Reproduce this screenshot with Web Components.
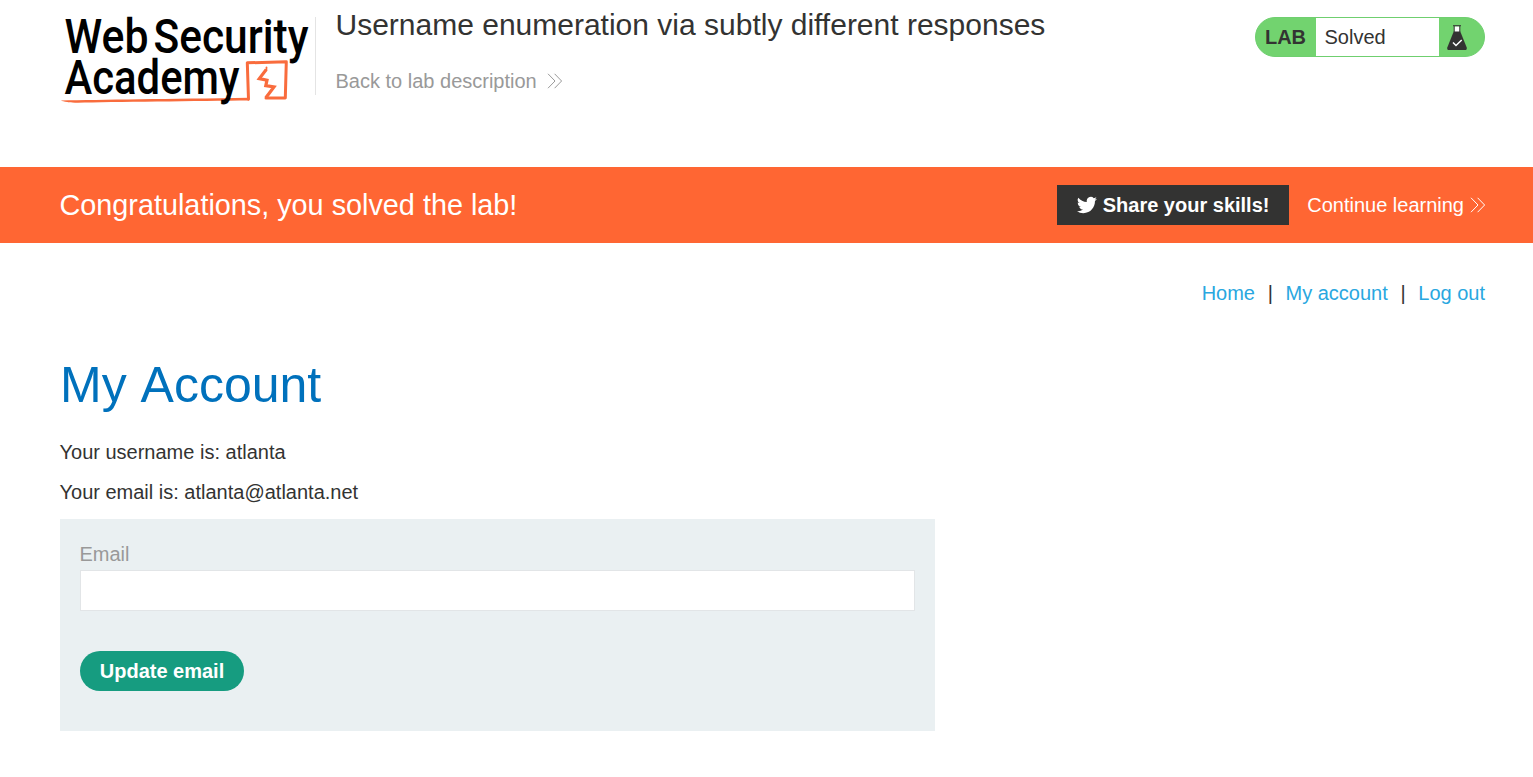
<!DOCTYPE html>
<html lang="en">
<head>
<meta charset="utf-8">
<title>Username enumeration via subtly different responses</title>
<style>
html,body{margin:0;padding:0;background:#fff}
body{font-family:"Liberation Sans",Arial,sans-serif;font-size:20px;line-height:24px;color:#333332;overflow:hidden}
</style>
</head>
<body>
<academy-page></academy-page>
<script>
function define(name, html) {
  const template = document.createElement('template');
  template.innerHTML = html;
  customElements.define(name, class extends HTMLElement {
    constructor() {
      super();
      this.attachShadow({mode: 'open'}).append(template.content.cloneNode(true));
    }
  });
}

define('double-chevron', `
<style>:host{display:inline-block;width:16px;height:16px}svg{display:block}</style>
<svg width="16" height="16" viewBox="0 0 16 16" fill="none" stroke="currentColor" stroke-width="1"><path d="M1 .8 8 8 1 15.2M7.6.8 14.6 8 7.6 15.2"/></svg>`);

define('academy-logo', `
<style>:host{display:block;width:255px;height:110px}svg{display:block;overflow:visible}text{font-family:Roboto,sans-serif;font-weight:500;font-size:48px;fill:#000}</style>
<svg width="255" height="110" viewBox="60 0 255 110">
<g fill="none" stroke="#f96c3d" stroke-linejoin="round" stroke-linecap="round">
<path stroke-width="3" d="M248.5 99.3 247.3 62.8 286.3 61.8 285.3 98H266"/>
<path stroke-width="3.2" stroke-linejoin="miter" stroke-linecap="butt" d="M266.3 69.5 259.3 78.6 267 80.2 265.8 85.6 274 86.9 265.8 97.8"/>
<path stroke-width="1.6" d="M266.5 67.3V70"/>
</g>
<path fill="#f96c3d" d="M61 100.5C100 99.8 170 99 249 97.8V100.6C200 101.2 110 102 78 102.8 70 102.8 63 101.7 61 100.5Z"/>
<text x="64.5" y="53.3" textLength="84" lengthAdjust="spacingAndGlyphs">Web</text>
<text x="153.5" y="53.3" textLength="155" lengthAdjust="spacingAndGlyphs">Security</text>
<text x="64.5" y="94" textLength="175" lengthAdjust="spacingAndGlyphs">Academy</text>
</svg>`);

define('lab-status', `
<style>
:host{display:flex;box-sizing:border-box;width:230px;height:40px;border:1px solid #6fcf6f;border-radius:20px;background:#72d36f;overflow:hidden;line-height:38px}
b{width:60px;text-align:center;box-sizing:border-box;color:#333332;padding-right:1px}
span{width:123px;box-sizing:border-box;padding-left:8.5px;background:#fff}
svg{display:block;margin:7px 0 0 7px}
</style>
<b>LAB</b><span><slot></slot></span>
<svg width="22" height="27" viewBox="0 0 22 27"><path fill="#fff" d="M8.2 1.5h5.6v6H8.2z"/><path fill="none" stroke="#333332" d="M7 .7h8M8.2 1v6M13.8 1v6"/><path fill="#333332" d="M7.7 6.5h6.6l6.3 15.8q.9 2.8-1.6 2.8H3q-2.5 0-1.6-2.8z"/><path fill="none" stroke="#fff" stroke-width="1.5" d="m7 17.5 3 3L15.7 15"/></svg>`);

define('lab-header', `
<style>
:host{display:flex;height:167px;padding:0 48px 0 60px;align-items:flex-start}
.info{border-left:1px solid #e4e4e4;height:78px;margin-top:17px;padding-left:19.5px;flex:1}
h2{font-weight:400;font-size:30px;line-height:36px;margin:-10px 0 0;white-space:nowrap}
a{display:flex;align-items:center;gap:10px;color:#999;margin-top:26px}
lab-status{margin-top:17px}
</style>
<academy-logo></academy-logo>
<div class="info"><h2>Username enumeration via subtly different responses</h2><a>Back to lab description<double-chevron></double-chevron></a></div>
<lab-status>Solved</lab-status>`);

define('solved-banner', `
<style>
:host{display:flex;align-items:center;box-sizing:border-box;height:76px;background:#ff6633;color:#fff;padding:0 47px 0 59.5px}
h4{font-weight:400;font-size:28.8px;line-height:34px;margin:0;flex:1}
.share{display:flex;align-items:center;box-sizing:border-box;width:232px;height:40px;background:#333332;font-weight:700;padding-left:20px;gap:6px;white-space:nowrap;margin-right:18.5px}
.next{display:flex;align-items:center;gap:6px}
</style>
<h4>Congratulations, you solved the lab!</h4>
<a class="share"><svg width="20" height="20" viewBox="0 0 24 24" fill="#fff"><path d="M23.95 4.57a10 10 0 0 1-2.82.77 4.96 4.96 0 0 0 2.16-2.72c-.95.55-2 .96-3.13 1.18a4.92 4.92 0 0 0-8.38 4.48C7.69 8.1 4.07 6.13 1.64 3.16a4.9 4.9 0 0 0 1.52 6.57 4.9 4.9 0 0 1-2.23-.62v.06a4.92 4.92 0 0 0 3.95 4.83 5 5 0 0 1-2.21.08 4.94 4.94 0 0 0 4.6 3.42A9.87 9.87 0 0 1 0 19.54a14 14 0 0 0 7.55 2.21c9.05 0 14-7.5 14-13.98l-.02-.64a10 10 0 0 0 2.42-2.56z"/></svg>Share your skills!</a>
<a class="next">Continue learning<double-chevron></double-chevron></a>`);

define('account-nav', `
<style>:host{display:flex;justify-content:flex-end;padding:38px 48px 0 0}a{color:#29a7df}i{font-style:normal;width:30.5px;text-align:center}</style>
<a>Home</a><i>|</i><a>My account</a><i>|</i><a>Log out</a>`);

define('email-form', `
<style>
:host{display:block;box-sizing:border-box;width:875px;height:212px;background:#eaf0f2;padding:23px 20px 0}
label{display:block;color:#999;margin-left:-.5px}
input{display:block;box-sizing:border-box;width:835px;height:41px;margin:4px 0 40px;border:1px solid #e2e5e7;background:#fff;font:inherit;padding:0 10px;outline:0}
button{display:block;width:164px;height:40px;border:0;border-radius:20px;background:#169c80;color:#fff;font:inherit;font-weight:700;padding:0}
</style>
<label for="email">Email</label><input id="email" type="email"><button>Update email</button>`);

define('account-details', `
<style>
:host{display:block;padding:50px 60px 0}
h1{font-weight:400;font-size:50px;line-height:60px;color:#0071bc;margin:0 0 25px;font-kerning:none}
p{margin:0 0 16px -.5px}p+p{margin-bottom:15px}
</style>
<h1>My Account</h1><p>Your username is: atlanta</p><p>Your email is: atlanta@atlanta.net</p><email-form></email-form>`);

define('academy-page', `
<style>:host{display:block;width:1533px;height:777px;overflow:hidden}</style>
<lab-header></lab-header><solved-banner></solved-banner><account-nav></account-nav><account-details></account-details>`);
</script>
</body>
</html>
